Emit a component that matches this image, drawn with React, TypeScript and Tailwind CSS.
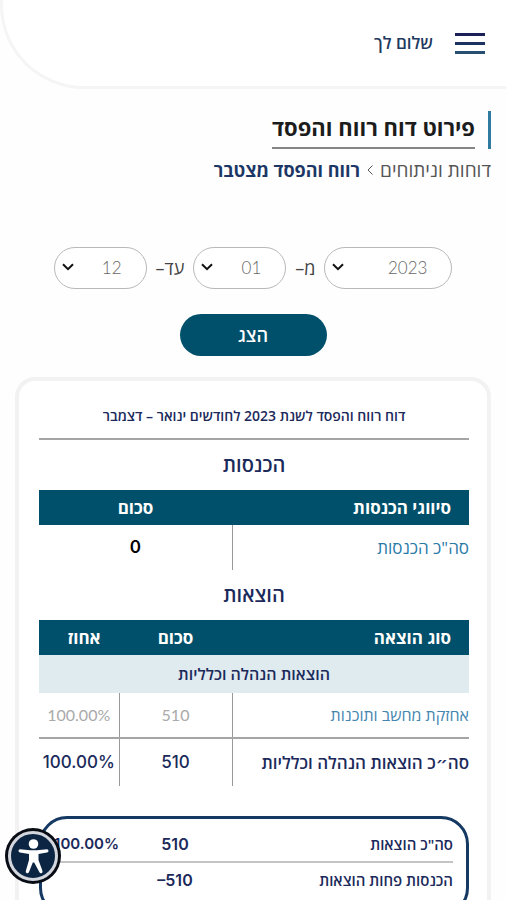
import { ReactNode } from "react";

const years = ["2023", "2022", "2021"];
const months = ["01", "02", "03", "04", "05", "06", "07", "08", "09", "10", "11", "12"];

function PillSelect({ label, value, options, className }: { label: string; value: string; options: string[]; className: string }) {
  return (
    <div className={`relative ${className}`}>
      <select
        aria-label={label}
        defaultValue={value}
        className="h-[42px] w-full appearance-none rounded-full border border-[#b9b9b9] bg-white pr-6 pl-8 font-['Lato','Open_Sans',sans-serif] text-[17px] font-light text-[#666]"
      >
        {options.map((o) => (
          <option key={o}>{o}</option>
        ))}
      </select>
      <svg className="pointer-events-none absolute top-4 left-2 h-2 w-3" viewBox="0 0 12 8" fill="none" stroke="#111" strokeWidth="2">
        <path d="M1 1.2 6 6.2 11 1.2" />
      </svg>
    </div>
  );
}

function SectionTitle({ children }: { children: ReactNode }) {
  return <h2 className="py-[11px] text-center text-xl leading-7 font-semibold text-[#1b2a5b]">{children}</h2>;
}

function AccessibilityButton() {
  return (
    <button aria-label="נגישות" className="fixed bottom-4 left-[5px] z-10 size-14 rounded-full">
      <svg viewBox="0 0 56 56" className="size-14">
        <circle cx="28" cy="28" r="28" fill="#080c14" />
        <circle cx="28" cy="28" r="23.500" fill="#0b2543" stroke="#d3d6dc" strokeWidth="3" />
        <circle cx="28.500" cy="16" r="4.800" fill="#fff" />
        <path
          d="M15 21.300 L25 22.300 H32 L42 21.300 Q43.500 21.300 43.500 23 Q43.500 24.300 42 24.500 L33.500 26 V32 L37.500 43 Q37.800 44.700 36.500 45.200 Q35 45.600 34.300 44 L29.200 34.500 H27.800 L24 44 Q23.200 45.600 21.800 45.200 Q20.300 44.600 20.800 43 L24 32 V26 L15 24.500 Q13.500 24.300 13.500 22.800 Q13.500 21.300 15 21.300 Z"
          fill="#fff"
        />
      </svg>
    </button>
  );
}

export default function App() {
  return (
    <div dir="rtl" className="h-screen overflow-y-auto bg-[#fefefe] font-['Open_Sans','DejaVu_Sans',sans-serif] text-[#1b2a5b] [scrollbar-width:none]">
      <header className="flex h-[89px] items-center gap-[22px] rounded-bl-[84px] border-b-[3px] border-l-[3px] border-[#f5f5f5] bg-white pr-[21px]">
        <button aria-label="תפריט" className="flex w-[30px] flex-col gap-[6px]">
          <span className="h-[3px] bg-[#1b2158]" />
          <span className="h-[3px] bg-[#1d3463]" />
          <span className="h-[3px] bg-[#274f72]" />
        </button>
        <span className="text-[17px] font-semibold text-[#1f3a60]">שלום לך</span>
      </header>

      <main className="px-[15px] pt-[22px]">
        <div className="flex">
          <div className="border-r-[3px] border-[#2f7ba0] pr-[13px]">
            <h1 className="border-b-2 border-[#858585] pb-1 text-[22px] leading-8 font-bold text-[#1c1c1c]">פירוט דוח רווח והפסד</h1>
          </div>
        </div>
        <nav className="mt-[7px] flex items-center gap-[7px] text-lg leading-7">
          <a href="#reports" className="text-[19px] text-[#555]">דוחות וניתוחים</a>
          <svg className="h-[10px] w-[6px]" viewBox="0 0 6 10" fill="none" stroke="#555">
            <path d="M5.500 .5 1 5 5.500 9.500" />
          </svg>
          <span className="font-bold text-[#1c3765]">רווח והפסד מצטבר</span>
        </nav>

        <form className="mt-[63px]" onSubmit={(e) => e.preventDefault()}>
          <div className="flex items-center justify-center gap-[9px] text-lg text-[#444]">
            <PillSelect label="שנה" value="2023" options={years} className="w-32" />
            <span>מ–</span>
            <PillSelect label="מחודש" value="01" options={months} className="w-[93px]" />
            <span>עד–</span>
            <PillSelect label="עד חודש" value="12" options={months} className="w-[93px]" />
          </div>
          <button className="mx-auto mt-[25px] block h-[42px] w-[147px] rounded-full bg-[#00506b] text-lg font-semibold text-white">הצג</button>
        </form>

        <section className="mt-[21px] rounded-[20px] border-4 border-[#f2f2f2] bg-white pr-[18px] pb-10 pl-5">
          <p className="border-b-2 border-[#a5a5a5] pt-[23px] pb-[10px] text-center text-sm leading-6 font-semibold">
            דוח רווח והפסד לשנת 2023 לחודשים ינואר – דצמבר
          </p>

          <SectionTitle>הכנסות</SectionTitle>
          <table className="w-full table-fixed border-collapse">
            <colgroup>
              <col />
              <col className="w-[193px]" />
            </colgroup>
            <thead className="bg-[#00506b] text-[17px] text-white">
              <tr className="h-[35px]">
                <th className="pr-[18px] text-right">סיווגי הכנסות</th>
                <th>סכום</th>
              </tr>
            </thead>
            <tbody>
              <tr className="h-[45px]">
                <td className="text-[17px] text-[#2a7aa8]">סה"כ הכנסות</td>
                <td className="border-r border-[#999] text-center font-['Inter'] text-[17px] font-semibold text-black">0</td>
              </tr>
            </tbody>
          </table>

          <SectionTitle>הוצאות</SectionTitle>
          <table className="w-full table-fixed border-collapse">
            <colgroup>
              <col />
              <col className="w-[113px]" />
              <col className="w-20" />
            </colgroup>
            <thead className="bg-[#00506b] text-[17px] text-white">
              <tr className="h-[35px]">
                <th className="pr-[18px] text-right">סוג הוצאה</th>
                <th>סכום</th>
                <th className="pl-[10px]">אחוז</th>
              </tr>
            </thead>
            <tbody>
              <tr className="h-[38px] bg-[#e0ebef]">
                <th colSpan={3} className="text-base font-semibold">הוצאות הנהלה וכלליות</th>
              </tr>
              <tr className="h-[45px] border-b-2 border-[#a5a5a5]">
                <td className="text-base text-[#4486b0]">אחזקת מחשב ותוכנות</td>
                <td className="border-r border-[#999] text-center font-['Lato'] text-base text-[#aaa]">510</td>
                <td className="border-r border-[#999] text-center font-['Lato'] text-base text-[#aaa]">100.00%</td>
              </tr>
              <tr className="h-12">
                <td className="text-[17px] font-semibold">סה״כ הוצאות הנהלה וכלליות</td>
                <td className="border-r border-[#999] text-center font-['Inter'] text-[17px] font-medium">510</td>
                <td className="border-r border-[#999] text-center font-['Inter'] text-[17px] font-medium">100.00%</td>
              </tr>
            </tbody>
          </table>

          <div className="mt-[30px] rounded-[28px] border-[3px] border-[#153962] px-[13px] pt-2 pb-4">
            <table className="w-full table-fixed border-collapse">
              <colgroup>
                <col />
                <col className="w-[112px]" />
                <col className="w-16" />
              </colgroup>
              <tbody className="text-[15px] font-semibold">
                <tr className="h-[35px] border-b-2 border-[#c4c4c4]">
                  <td>סה"כ הוצאות</td>
                  <td className="text-center font-['Inter'] text-base">510</td>
                  <td className="font-['Inter']">100.00%</td>
                </tr>
                <tr className="h-[35px]">
                  <td>הכנסות פחות הוצאות</td>
                  <td dir="ltr" className="text-center font-['Inter'] text-base">–510</td>
                  <td />
                </tr>
              </tbody>
            </table>
          </div>
        </section>
      </main>

      <AccessibilityButton />
    </div>
  );
}
